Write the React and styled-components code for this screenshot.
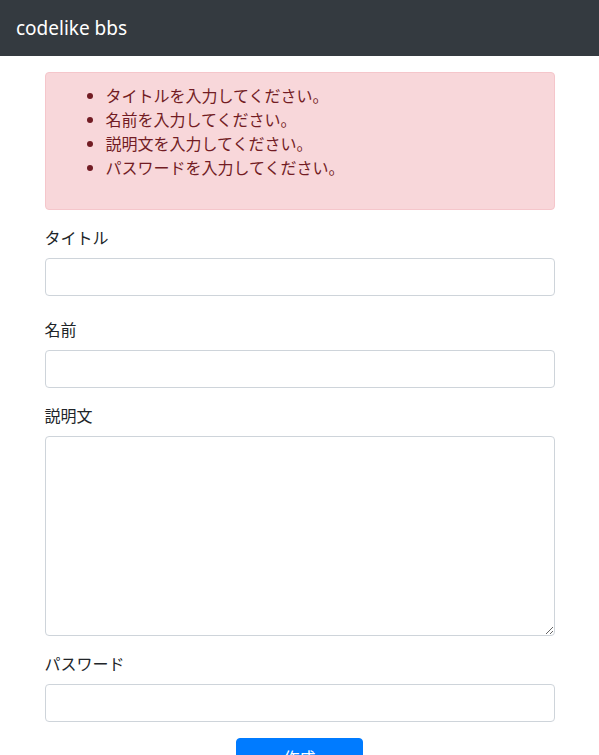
import styled, { createGlobalStyle } from 'styled-components'

const GlobalStyle = createGlobalStyle`
    * {
        box-sizing: border-box;
    }
    body {
        margin: 0;
        font-family: 'Noto Sans', 'Noto Sans CJK JP', sans-serif;
        font-size: 16px;
        line-height: 1.5;
        color: #212529;
        background-color: #ffffff;
    }
`

const Navbar = styled.nav`
    display: flex;
    align-items: center;
    height: 56px;
    padding: 8px 16px;
    background-color: #343a40;
`

const Brand = styled.a`
    font-family: 'Noto Sans', 'Noto Sans CJK JP', sans-serif;
    font-size: 19px;
    line-height: 30px;
    color: #ffffff;
    text-decoration: none;
`

const Container = styled.main`
    width: 510px;
    margin: 16px auto 0;
`

const Alert = styled.div`
    padding: 12px 20px;
    margin-bottom: 16px;
    color: #721c24;
    background-color: #f8d7da;
    border: 1px solid #f5c6cb;
    border-radius: 4px;
`

const ErrorList = styled.ul`
    margin: -2px 0 18px;
    padding-left: 40px;
    font-family: 'Noto Sans CJK JP', sans-serif;
    line-height: 24px;
`

const FormGroup = styled.div`
    display: flex;
    flex-direction: column;
    margin-bottom: ${props => props.gap || 16}px;
`

const Label = styled.label`
    display: block;
    margin: -1px 0 9px;
    font-family: 'Noto Sans CJK JP', sans-serif;
    line-height: 24px;
`

const Input = styled.input`
    width: 100%;
    height: 38px;
    padding: 6px 12px;
    font-size: 16px;
    color: #495057;
    background-color: #ffffff;
    border: 1px solid #ced4da;
    border-radius: 4px;
    outline: none;
`

const TextArea = styled.textarea`
    width: 100%;
    height: 200px;
    padding: 6px 12px;
    font-size: 16px;
    font-family: inherit;
    color: #495057;
    background-color: #ffffff;
    border: 1px solid #ced4da;
    border-radius: 4px;
    outline: none;
    resize: vertical;
`

const Actions = styled.div`
    display: flex;
    justify-content: center;
`

const SubmitButton = styled.button`
    width: 127px;
    height: 38px;
    padding: 6px 12px;
    font-family: 'Noto Sans CJK JP', sans-serif;
    font-size: 16px;
    line-height: 24px;
    color: #ffffff;
    background-color: #007bff;
    border: 1px solid #007bff;
    border-radius: 4px;
`

const errors = [
    'タイトルを入力してください。',
    '名前を入力してください。',
    '説明文を入力してください。',
    'パスワードを入力してください。',
]

export default function App() {
    return (
        <>
            <GlobalStyle />
            <Navbar>
                <Brand href="#">codelike bbs</Brand>
            </Navbar>
            <Container>
                <Alert>
                    <ErrorList>
                        {errors.map(error => <li key={error}>{error}</li>)}
                    </ErrorList>
                </Alert>
                <form>
                    <FormGroup gap={22}>
                        <Label htmlFor="title">タイトル</Label>
                        <Input id="title" type="text" />
                    </FormGroup>
                    <FormGroup>
                        <Label htmlFor="name">名前</Label>
                        <Input id="name" type="text" />
                    </FormGroup>
                    <FormGroup>
                        <Label htmlFor="description">説明文</Label>
                        <TextArea id="description" />
                    </FormGroup>
                    <FormGroup>
                        <Label htmlFor="password">パスワード</Label>
                        <Input id="password" type="password" />
                    </FormGroup>
                    <Actions>
                        <SubmitButton type="submit">作成</SubmitButton>
                    </Actions>
                </form>
            </Container>
        </>
    )
}
